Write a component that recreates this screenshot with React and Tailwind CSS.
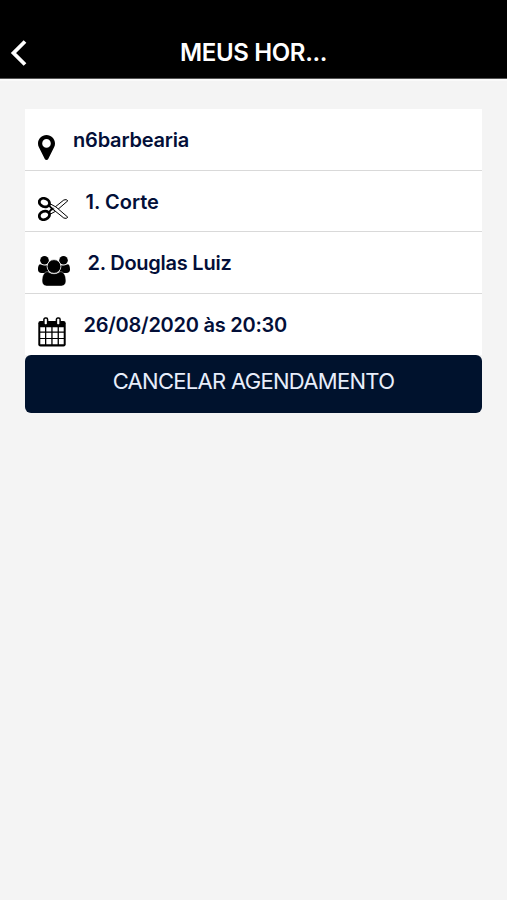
import React from "react";

function PinIcon() {
  return (
    <svg width="17" height="25" viewBox="0 0 17 25" fill="black">
      <path
        fillRule="evenodd"
        d="M8.500 0C3.800 0 0 3.800 0 8.400c0 1.400.3 2.500.8 3.600l6 12c.3.6.9 1 1.700 1s1.400-.4 1.700-1l6-12c.5-1.100.8-2.200.8-3.600C17 3.800 13.200 0 8.500 0zM8.500 4.100a4.300 4.300 0 1 1 0 8.600 4.300 4.300 0 0 1 0-8.600z"
      />
    </svg>
  );
}

function ScissorsIcon() {
  return (
    <svg width="31" height="24" viewBox="0 0 31 24" fill="none" stroke="black">
      <g fill="white" strokeWidth="1" strokeLinejoin="round">
        <path d="M11.500 14.500 L25.800 3 Q28.500 1.800 29.800 3.800 L18 14 L12.500 17 Z" />
        <path d="M11.500 9.500 L25.800 21 Q28.500 22.200 29.800 20.200 L18 10 L12.500 7 Z" />
      </g>
      <ellipse cx="6.400" cy="5.600" rx="5.200" ry="4.100" strokeWidth="2.800" transform="rotate(20 6.400 5.600)" />
      <ellipse cx="6.400" cy="18.400" rx="5.200" ry="4.100" strokeWidth="2.800" transform="rotate(-20 6.400 18.400)" />
      <path d="M10.500 8.200 L14 11.500 L10.500 15.800" strokeWidth="1.800" />
      <circle cx="15" cy="12" r="1" strokeWidth="0.700" />
    </svg>
  );
}

function UsersIcon() {
  return (
    <svg width="32" height="30" viewBox="0 0 32 30" fill="black">
      <circle cx="6.500" cy="4.300" r="4.300" />
      <circle cx="25.500" cy="4.300" r="4.300" />
      <path d="M2.200 8.300c.8 0 2 1.200 4.300 1.200s3-.8 4-.8v8.300H3.500C1.300 17 0 15.800 0 13.800c0-2.300.4-5.500 2.200-5.500z" />
      <path d="M29.800 8.300c-.8 0-2 1.200-4.300 1.200s-3-.8-4-.8v8.300h7c2.200 0 3.500-1.200 3.500-3.200 0-2.300-.4-5.500-2.200-5.500z" />
      <path
        d="M9.500 15.700c.9 0 3 2.100 6.500 2.100s5.600-2.100 6.500-2.100c3.800 0 5.400 4.700 5.400 9.400 0 2.900-1.800 4.900-4.600 4.900H8.700c-2.800 0-4.600-2-4.600-4.900 0-4.700 1.600-9.400 5.400-9.400z"
        stroke="white"
        strokeWidth="0.400"
      />
      <circle cx="16" cy="10.500" r="6.900" stroke="white" strokeWidth="0.800" />
    </svg>
  );
}

function CalendarIcon() {
  return (
    <svg width="28" height="30" viewBox="0 0 28 30">
      <rect x="0.300" y="4" width="27.400" height="25.500" rx="2.200" fill="black" />
      <path
        fill="white"
        d="M2.300 10.200h4.700v4.300h-4.700zM8.300 10.200h5v4.300h-5zM14.600 10.200h5v4.300h-5zM20.900 10.200h4.800v4.300h-4.800zM2.300 15.700h4.700v5.200h-4.700zM8.300 15.700h5v5.200h-5zM14.600 15.700h5v5.200h-5zM20.900 15.700h4.800v5.200h-4.800zM2.300 22.100h4.700v5.200h-4.700zM8.300 22.100h5v5.200h-5zM14.600 22.100h5v5.200h-5zM20.900 22.100h4.800v5.200h-4.800z"
      />
      <rect x="5.900" y="1" width="3.700" height="7" rx="1.400" fill="white" stroke="black" strokeWidth="1.500" />
      <rect x="18.400" y="1" width="3.700" height="7" rx="1.400" fill="white" stroke="black" strokeWidth="1.500" />
    </svg>
  );
}

const rows = [
  { icon: PinIcon, label: "n6barbearia", iconClass: "w-[35.500px] pt-[25.500px]", textClass: "pt-[15.500px] tracking-[-0.2px]" },
  { icon: ScissorsIcon, label: "1. Corte", iconClass: "w-[48px] pt-[26.500px]", textClass: "pt-[16px] tracking-[0px]" },
  { icon: UsersIcon, label: "2. Douglas Luiz", iconClass: "w-[50px] pt-[23.500px]", textClass: "pt-[15.500px] tracking-[-0.25px]" },
  { icon: CalendarIcon, label: "26/08/2020 às 20:30", iconClass: "w-[46px] pt-[23.500px]", textClass: "pt-[16px] tracking-[-0.25px]" },
];

export default function App() {
  return (
    <div className="min-h-[900px] bg-[#f4f4f4] font-['Inter',sans-serif]">
      {/* Header */}
      <header className="flex h-[79px] items-end border-b border-[#555555] bg-black pb-[7px] text-white">
        <button className="flex h-9 w-[60px] items-center pl-[10px]" aria-label="Voltar">
          <svg width="17" height="26" viewBox="0 0 17 26" fill="none" stroke="white" strokeWidth="3.800">
            <path d="M15 1.500 L3.500 13 L15 24.500" />
          </svg>
        </button>
        <h1 className="flex-1 pr-[60px] text-center text-[24px] leading-9 font-semibold tracking-[-0.35px]">MEUS HOR...</h1>
      </header>

      {/* Booking details */}
      <main className="border-t-2 border-[#fafafa] px-[25px] pt-[28px]">
        <ul className="bg-white">
          {rows.map(({ icon: Icon, label, iconClass, textClass }) => (
            <li
              key={label}
              className="flex h-[61.500px] border-b border-[#d9d9d9] pl-[12.500px] last:border-white"
            >
              <div className={`shrink-0 ${iconClass}`}>
                <Icon />
              </div>
              <span className={`text-[20px] leading-[30px] font-semibold whitespace-nowrap text-[#030f38] ${textClass}`}>
                {label}
              </span>
            </li>
          ))}
        </ul>
        <button className="flex h-[58px] w-full justify-center rounded-[6px] bg-[#00122d] pt-[11px] text-[22px] leading-[30px] tracking-[-0.7px] text-[#e8eefb]">
          CANCELAR AGENDAMENTO
        </button>
      </main>
    </div>
  );
}
